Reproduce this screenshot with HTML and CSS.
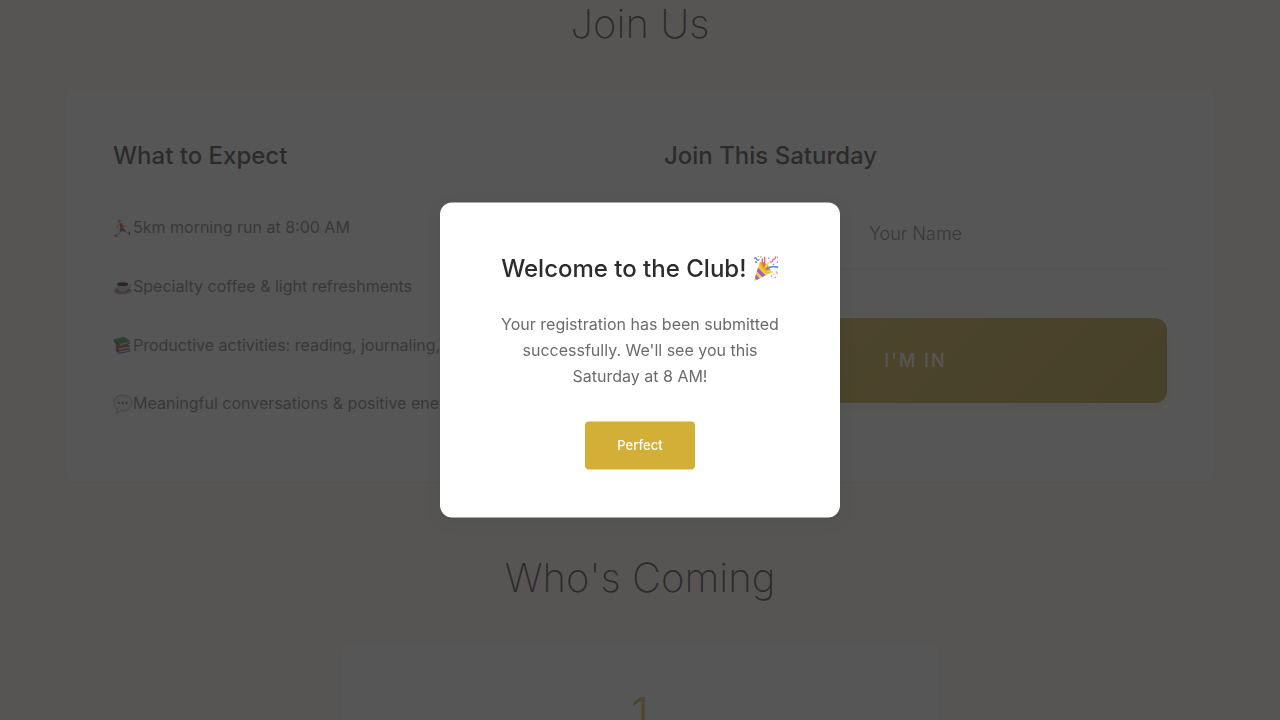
FILE: index.html
```html
<!DOCTYPE html>
<html lang="en">
<head>
<meta charset="utf-8">
<meta name="viewport" content="width=device-width, initial-scale=1">
<title>Join Us</title>
<link rel="stylesheet" href="styles.css">
</head>
<body>
<main class="page">
  <section class="section">
    <h2 class="section-title">Join Us</h2>
    <div class="card join-card">
      <div>
        <h3 class="card-title">What to Expect</h3>
        <ul class="expect-list">
          <li>
            <svg class="item-icon" viewBox="0 0 20 20" fill="none" stroke-linecap="round" stroke-linejoin="round" aria-hidden="true">
              <path d="M6 6.300 3.600 8.300l1 2M9 6.500l2 2.200 1.600-1" stroke="#d9a02d" stroke-width="1.100"/>
              <path d="M8 12.500l-1.200 2.300-3.600 2.400M10.500 12l2.600 2.400 2.800 .8" stroke="#d9a43a" stroke-width="1.300"/>
              <path d="M6.300 5.400 9 5l1.400 5.600-3 .7z" fill="#d0386a"/>
              <path d="M7.200 10.600l3.400-.4 2 2.800-1.400 .9-1.900-1.300-1.400 1.400-1.400-.9z" fill="#4a4f9e"/>
              <circle cx="6.100" cy="3.200" r="1.600" fill="#e0b03d"/>
              <path d="M4.900 2.200Q6.200 .8 7.600 2v1.600z" fill="#a8742a"/>
              <path d="M1.800 17.500l1.900 .6M16.400 14.200v2.200" stroke="#3b4250" stroke-width="1.300"/>
            </svg>5km morning run at 8:00 AM
          </li>
          <li>
            <svg class="item-icon" viewBox="0 0 20 20" fill="none" aria-hidden="true">
              <path d="M8 4.500q-2-1.400 0-2.600M10 3.800q1-1 0-2" stroke="#ddd" stroke-width="1"/>
              <ellipse cx="9.700" cy="13.800" rx="9" ry="3.700" fill="#aaa49f"/>
              <ellipse cx="9.700" cy="13.200" rx="7" ry="2.400" fill="#79716d"/>
              <path d="M14.800 7.700q3.200-.8 2.800 1.300-.6 2-3.800 2.200" stroke="#c8c2bf" stroke-width="1.200"/>
              <path d="M3.600 7q.2 7 4.200 7.700h3.800q4-.7 4.200-7.700z" fill="#cfc9c5"/>
              <ellipse cx="9.700" cy="7" rx="6.100" ry="2.400" fill="#e5dfdb"/>
              <ellipse cx="9.700" cy="7.200" rx="5.400" ry="1.900" fill="#240e08"/>
            </svg>Specialty coffee &amp; light refreshments
          </li>
          <li>
            <svg class="item-icon" viewBox="0 0 20 20" aria-hidden="true">
              <path d="M2.500 13.500 13 12l4.300 2.500v2L6 19l-3.200-3z" fill="#4d4f94"/>
              <path d="M6 16.200l11-1.800v1.400L6.200 18z" fill="#d6d2d8"/>
              <path d="M2.800 9.500 13 8l4 3v2.500L6 15.400 3 12.600z" fill="#c5321f"/>
              <path d="M5.800 13.200l10.800-1.600v1.400L6 15z" fill="#ded5ce"/>
              <path d="M1 4.600 10.800 2l6.400 4.400v2L6.800 11.600 1 7z" fill="#1d6e2d"/>
              <path d="M1 4.600 10.800 2l6.400 4L6.800 8.800z" fill="#3a9040"/>
              <path d="M7 9l9.800-2.700v1.500L7 10.800z" fill="#c0cab9"/>
            </svg>Productive activities: reading, journaling, etc.
          </li>
          <li>
            <svg class="item-icon" viewBox="0 0 20 20" aria-hidden="true">
              <path d="M9.800 1C4.700 1 .7 4.400.7 8.800c0 2.700 1.300 4.800 3.400 6.200.2 1.700-.5 3-1.600 4.200 2.300-.1 4-1 5.100-2.500.7.100 1.400.2 2.200.2 5.200 0 9.100-3.600 9.100-8.100S15 1 9.800 1z" fill="#eee" stroke="#999" stroke-width="1"/>
              <circle cx="6" cy="9" r="1" fill="#333"/>
              <circle cx="9.800" cy="9" r="1" fill="#333"/>
              <circle cx="13.600" cy="9" r="1" fill="#333"/>
            </svg>Meaningful conversations &amp; positive energy
          </li>
        </ul>
      </div>
      <div>
        <h3 class="card-title">Join This Saturday</h3>
        <form class="join-form">
          <input class="name-input" type="text" placeholder="Your Name" aria-label="Your Name">
          <button class="join-button" type="button">I'M IN</button>
        </form>
      </div>
    </div>
  </section>
  <section class="section">
    <h2 class="section-title">Who's Coming</h2>
    <div class="card count-card">
      <div class="count">1</div>
    </div>
  </section>
</main>
<div class="overlay">
  <div class="modal" role="dialog" aria-modal="true" aria-labelledby="modal-title">
    <h3 class="modal-title" id="modal-title">Welcome to the Club! <svg class="party-icon" viewBox="0 0 26 26" fill="none" stroke-linecap="round" aria-hidden="true">
        <path d="M1.300 24.500 6.500 7.500q7 1.500 11.500 9.500L3 24.900q-1.500.8-1.700-.4z" fill="#f9c93e"/>
        <path d="M5 12.300l7.500 7.600-3 1.600L3.800 16zM2.900 19.200l3.800 3.800-2.900 1.500L2 22.400z" fill="#9b61c9"/>
        <ellipse cx="12.300" cy="12" rx="3.400" ry="7.500" transform="rotate(-43 12.300 12)" fill="#f4b92a"/>
        <ellipse cx="12.700" cy="11.700" rx="2" ry="6" transform="rotate(-43 12.700 11.700)" fill="#e0951c"/>
        <path d="M10.500 10.500Q12.500 8 11.500 2M10.500 8.500Q8.500 6.500 9.500 3.500" stroke="#ef5a7b" stroke-width="1.300"/>
        <path d="M14 13.500q3-3 10.500-1.800" stroke="#4f8de6" stroke-width="1.600"/>
        <path d="M17 6.500q3 .7 3-2.500 2.500.3 2.500-2.500" stroke="#ef6484" stroke-width="1.200"/>
        <path d="M1.500 3q1.500-1.500 2 .5t2.500.8M2.500 6.500l1 .5" stroke="#4a80df" stroke-width="1.300"/>
        <path d="M12.200 11.800l3-4M15 15.500l4 1" stroke="#ffd84a" stroke-width="1.600"/>
        <g stroke-width="1.500">
          <path d="M7.800 1.500h.1M24.200 1.800h.1M24.300 6.700h.1M22.300 22h.1" stroke="#ee7296"/>
          <path d="M15.500 2.800h.1M20.500 9h.1M18.500 20.500h.1" stroke="#699fe6"/>
          <path d="M23.500 16.500l.8 1.500M21 19h.1M5.300 1h.1" stroke="#e8b577"/>
        </g>
      </svg></h3>
    <p class="modal-text">Your registration has been submitted successfully. We'll see you this Saturday at 8 AM!</p>
    <button class="modal-button" type="button">Perfect</button>
  </div>
</div>
</body>
</html>
```
FILE: styles.css
```css
* {
  box-sizing: border-box;
  margin: 0;
  padding: 0;
}

body {
  font-family: Inter, sans-serif;
  font-size: 16px;
  line-height: 1.6;
  color: #2c2c2c;
  background: #fefbf6;
  height: 100vh;
  overflow: hidden;
}

.page {
  max-width: 1200px;
  margin: -8px auto 0;
  padding: 0 24px;
}

.section {
  padding-bottom: 64px;
}

.section-title {
  font-size: 40px;
  font-weight: 200;
  text-align: center;
  margin-bottom: 32px;
}

.card {
  background: #fff;
  border: 1px solid rgba(0, 0, 0, 0.04);
  border-radius: 12px;
  padding: 48px;
  box-shadow: 0 2px 8px rgba(0, 0, 0, 0.04);
}

.join-card {
  display: grid;
  grid-template-columns: 1fr 1fr;
  gap: 48px;
}

.card-title {
  font-size: 24px;
  font-weight: 500;
  margin-bottom: 24px;
}

.expect-list {
  list-style: none;
  color: #6b6b6b;
}

.expect-list li {
  display: flex;
  align-items: center;
  padding: 16px 0;
  border-bottom: 1px solid #f5f5f5;
}

.expect-list li:last-child {
  border-bottom: 0;
}

.item-icon {
  flex: none;
  width: 20px;
  height: 20px;
}

.join-form {
  display: grid;
  gap: 48px;
}

.name-input {
  width: 100%;
  padding: 24px 0;
  border: 0;
  border-bottom: 2px solid #f0f0f0;
  background: transparent;
  font-family: inherit;
  font-size: 18px;
  font-weight: 300;
  text-align: center;
}

.name-input::placeholder {
  color: #6b6b6b;
}

.join-button {
  padding: 32px;
  border: 0;
  border-radius: 12px;
  background: linear-gradient(135deg, #d4af37, #b8941f);
  box-shadow: 0 4px 16px rgba(212, 175, 55, 0.15);
  color: #fff;
  font-family: inherit;
  font-size: 18px;
  font-weight: 500;
  letter-spacing: 2px;
}

.count-card {
  max-width: 600px;
  margin: 0 auto;
  text-align: center;
}

.count {
  color: #d4af37;
  font-size: 48px;
  font-weight: 300;
  line-height: 1;
}

.overlay {
  position: fixed;
  inset: 0;
  background: rgba(44, 44, 44, 0.8);
}

.modal {
  position: absolute;
  top: 50%;
  left: 50%;
  transform: translate(-50%, -50%);
  width: 90%;
  max-width: 400px;
  padding: 48px;
  border-radius: 12px;
  background: #fff;
  box-shadow: 0 4px 16px rgba(0, 0, 0, 0.08);
  text-align: center;
}

.modal-title {
  margin-bottom: 24px;
  font-size: 24px;
  font-weight: 500;
}

.party-icon {
  width: 26px;
  height: 26px;
  vertical-align: -4px;
}

.modal-text {
  margin-bottom: 32px;
  color: #6b6b6b;
}

.modal-button {
  padding: 16px 32px;
  border: 0;
  border-radius: 4px;
  background: #d4af37;
  color: #fff;
  font-family: inherit;
  font-size: 13px;
  font-weight: 500;
}
```
